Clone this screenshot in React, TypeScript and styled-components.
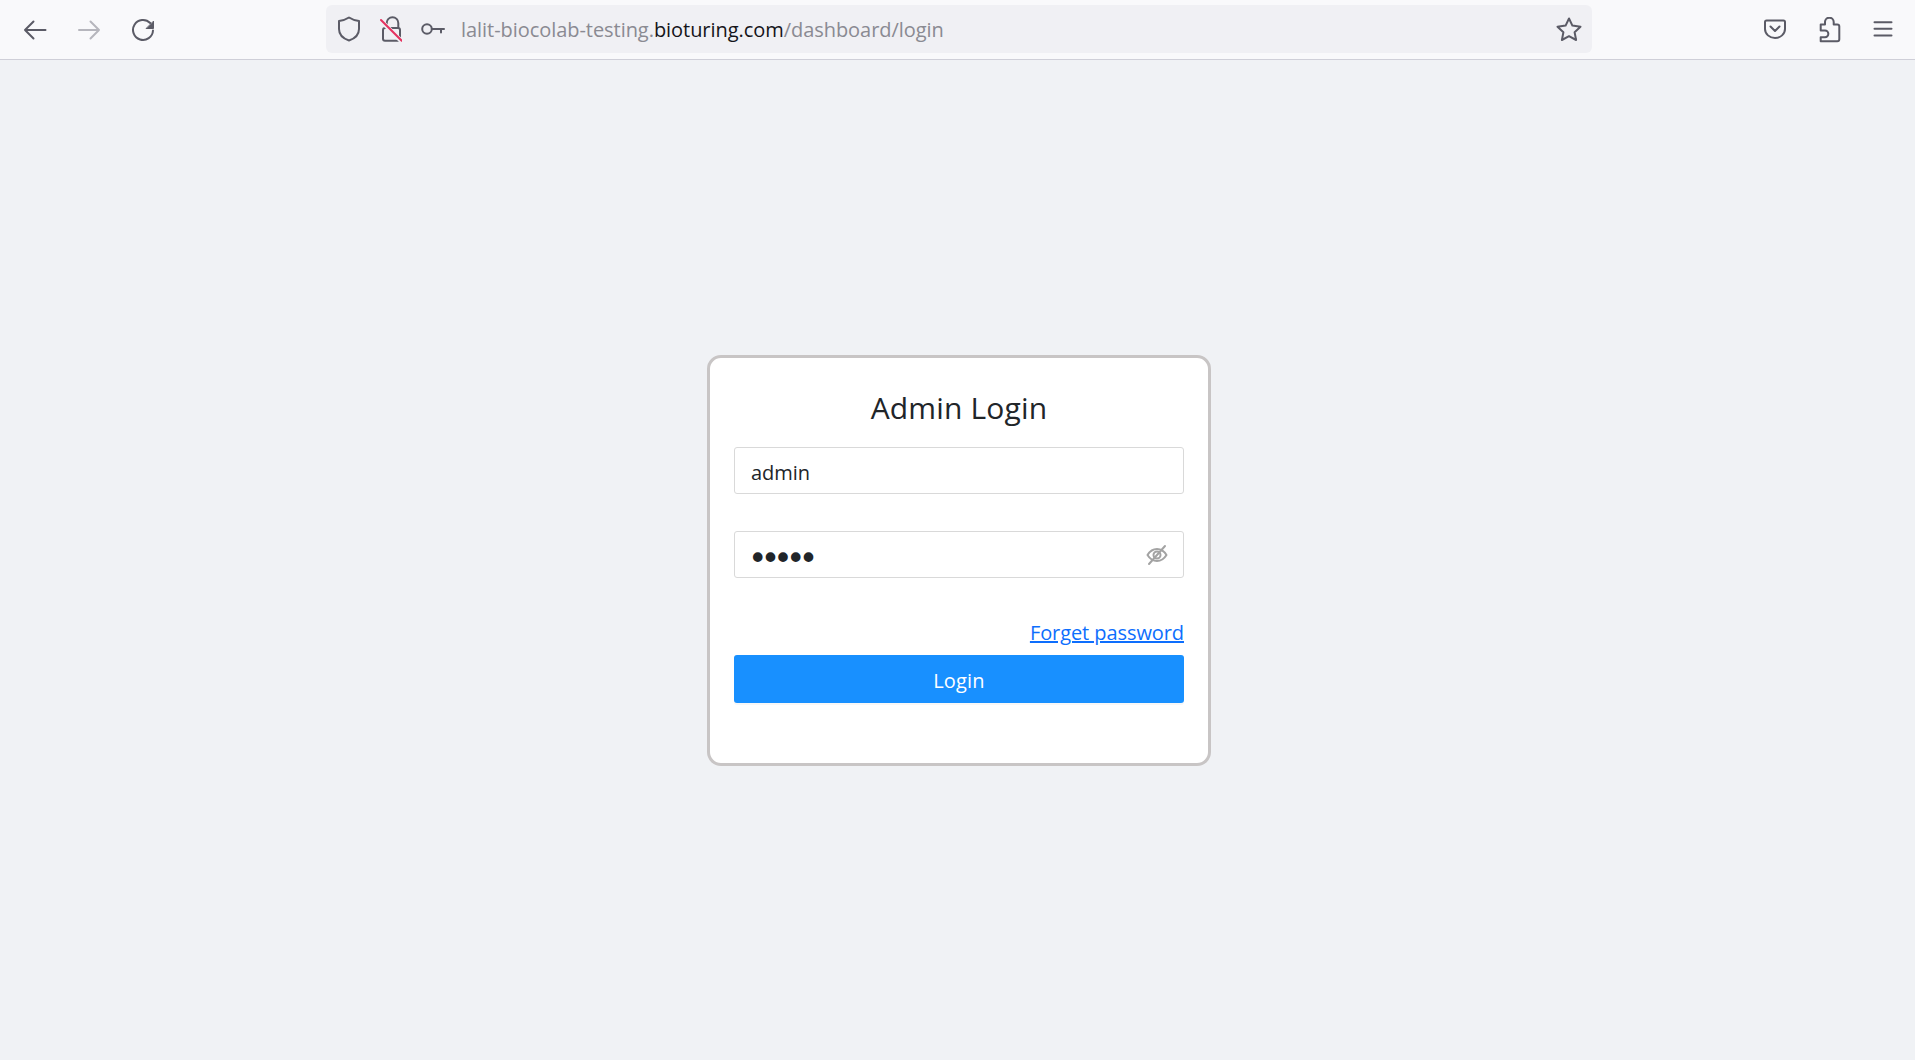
import React from "react";
import styled, { createGlobalStyle } from "styled-components";

const GlobalStyle = createGlobalStyle`
  html, body {
    margin: 0;
    padding: 0;
    height: 100%;
    background: #f0f2f5;
    font-family: "Open Sans", "Noto Sans", sans-serif;
  }
  #root {
    height: 100%;
  }
`;

const Page = styled.div`
  height: 1060px;
  display: flex;
  flex-direction: column;
  overflow: hidden;
`;

const Toolbar = styled.header`
  height: 58px;
  flex: none;
  display: flex;
  align-items: center;
  padding: 0 5px 1px 8px;
  background: #f9f9fb;
  border-bottom: 1px solid #cfcfd8;
`;

const NavGroup = styled.nav`
  display: flex;
  align-items: center;
`;

const ToolButton = styled.button<{ $dim?: boolean }>`
  width: 54px;
  height: 48px;
  padding: 2px 0 0;
  border: 0;
  background: none;
  display: flex;
  align-items: center;
  justify-content: center;
  color: ${(p) => (p.$dim ? "#b6b6bd" : "#5b5b66")};
`;

const UrlBar = styled.div`
  width: 1266px;
  height: 48px;
  margin-left: 156px;
  margin-right: auto;
  flex: none;
  display: flex;
  align-items: center;
  background: #f0f0f4;
  border-radius: 6px;
  color: #5b5b66;
`;

const UrlIcons = styled.div`
  display: flex;
  align-items: center;
  gap: 19px;
  padding-left: 11px;
`;

const UrlText = styled.div`
  margin-left: 16px;
  padding-top: 1px;
  flex: 1;
  font-size: 20px;
  letter-spacing: -0.05px;
  color: #8a8a92;
  white-space: nowrap;
`;

const Host = styled.span`
  color: #15141a;
`;

const StarSlot = styled.div`
  display: flex;
  padding-right: 10px;
`;

const Main = styled.main`
  flex: 1;
  display: flex;
  align-items: center;
  justify-content: center;
  padding: 1px 0 0 3px;
`;

const Card = styled.form`
  box-sizing: border-box;
  width: 504px;
  height: 411px;
  padding: 27px 24px 0;
  background: #fff;
  border: 3px solid #c8c5c5;
  border-radius: 14px;
  display: flex;
  flex-direction: column;
`;

const Title = styled.h1`
  margin: 0 0 16px;
  height: 46px;
  line-height: 46px;
  font-size: 30px;
  font-weight: 400;
  letter-spacing: 0.15px;
  text-align: center;
  color: #212529;
`;

const Field = styled.div`
  position: relative;
  height: 47px;
  margin-bottom: 37px;
`;

const Input = styled.input<{ $secret?: boolean }>`
  box-sizing: border-box;
  width: 100%;
  height: 100%;
  padding: ${(p) => (p.$secret ? "7px 13px 0" : "4px 16px 0")};
  font: 400 ${(p) => (p.$secret ? "33px \"DejaVu Sans\"" : "20px \"Open Sans\"")}, sans-serif;
  line-height: ${(p) => (p.$secret ? "30px" : "normal")};
  letter-spacing: ${(p) => (p.$secret ? "-6.8px" : "-0.06px")};
  color: #212529;
  background: #fff;
  border: 1px solid #d9d9d9;
  border-radius: 3px;
  outline: none;
`;

const EyeToggle = styled.span`
  position: absolute;
  top: 13px;
  right: 16px;
  display: flex;
  color: #a3a3a3;
`;

const LinkRow = styled.div`
  display: flex;
  justify-content: flex-end;
  margin-top: 5px;
  height: 26px;
  line-height: 26px;
`;

const ForgetLink = styled.a`
  font-size: 20px;
  letter-spacing: -0.08px;
  color: #0d6efd;
  text-decoration: underline;
`;

const SubmitButton = styled.button`
  margin-top: 9px;
  height: 48px;
  padding: 3px 0 0;
  font: 400 20px "Open Sans", "Noto Sans", sans-serif;
  letter-spacing: 0.2px;
  color: #fff;
  background: #1890ff;
  border: 0;
  border-radius: 3px;
  box-shadow: 0 2px 0 rgba(0, 0, 0, 0.03);
`;

const Icon = styled.svg.attrs({
  fill: "none",
  stroke: "currentColor",
  strokeWidth: 2,
  strokeLinecap: "round",
  strokeLinejoin: "round",
})`
  display: block;
  flex: none;
`;

export default function App() {
  return (
    <Page>
      <GlobalStyle />
      <Toolbar>
        <NavGroup>
          <ToolButton type="button" aria-label="Back">
            <Icon width="24" height="24" viewBox="0 0 24 24">
              <path d="M22.500 12H2M10.500 3.500L2 12l8.500 8.500" />
            </Icon>
          </ToolButton>
          <ToolButton type="button" aria-label="Forward" $dim>
            <Icon width="24" height="24" viewBox="0 0 24 24">
              <path d="M2 12h20M13.500 3.500L22 12l-8.500 8.500" />
            </Icon>
          </ToolButton>
          <ToolButton type="button" aria-label="Reload">
            <Icon width="24" height="24" viewBox="0 0 24 24">
              <path d="M19.200 5A10 10 0 1 0 22 12.500" />
              <path d="M22.500 3.500v7h-7z" fill="currentColor" strokeWidth="1" />
            </Icon>
          </ToolButton>
        </NavGroup>

        <UrlBar>
          <UrlIcons>
            <Icon width="24" height="26" viewBox="0 0 24 26">
              <path d="M12 1.500c3 2 6 3 10 3.500v8c0 5.500-4 9.500-10 11.500C6 22.500 2 18.500 2 13V5c4-.5 7-1.500 10-3.500z" />
            </Icon>
            <Icon width="22" height="26" viewBox="-1 0 22 26">
              <path d="M5.700 9V7a5.800 5.800 0 0 1 11.600 0v5" />
              <rect x="2" y="12" width="17" height="12.700" rx="2" />
              <path d="M0 4.800L20 24.800" stroke="#f0f0f4" strokeWidth="4.500" />
              <path d="M0 4L20.700 24.700" stroke="#e5325f" strokeWidth="2" />
            </Icon>
            <Icon width="24" height="14" viewBox="0 0 24 14">
              <circle cx="6" cy="7" r="4.800" />
              <path d="M10.800 7H23M20 7v3.500" />
            </Icon>
          </UrlIcons>
          <UrlText>
            lalit-biocolab-testing.<Host>bioturing.com</Host>/dashboard/login
          </UrlText>
          <StarSlot>
            <Icon width="26" height="25" viewBox="0 0 26 25">
              <path d="M13 1.500l3.400 7.100 8.100 1.100-5.900 5.500 1.500 7.800-7.100-3.800-7.100 3.800 1.500-7.800-5.900-5.500 8.100-1.100z" />
            </Icon>
          </StarSlot>
        </UrlBar>

        <NavGroup>
          <ToolButton type="button" aria-label="Pocket">
            <Icon width="24" height="22" viewBox="0 0 24 22">
              <path d="M3.500 1.500h17A1.500 1.500 0 0 1 22 3V10c0 5-4.500 9-10 9S2 15 2 10V3A1.500 1.500 0 0 1 3.500 1.500z" />
              <path d="M7.500 7.500L12 12l4.500-4.500" />
            </Icon>
          </ToolButton>
          <ToolButton type="button" aria-label="Extensions">
            <Icon width="24" height="26" viewBox="-1 0 24 26">
              <path d="M2.700 7.500H7V5a4.350 4.350 0 0 1 8.700 0v2.500h3.600a2 2 0 0 1 2 2v12.700a2 2 0 0 1-2 2H2.700v-4H7a3.350 3.350 0 0 0 0-6.700H2.700z" />
            </Icon>
          </ToolButton>
          <ToolButton type="button" aria-label="Menu">
            <Icon width="20" height="18" viewBox="0 0 20 18">
              <path d="M1.500 1.200h17M1.500 7.800h17M1.500 14.500h17" />
            </Icon>
          </ToolButton>
        </NavGroup>
      </Toolbar>

      <Main>
        <Card>
          <Title>Admin Login</Title>
          <Field>
            <Input type="text" defaultValue="admin" />
          </Field>
          <Field>
            <Input type="password" defaultValue="admin" $secret />
            <EyeToggle>
              <Icon width="22" height="22" viewBox="0 0 22 22" strokeWidth="1.500">
                <path d="M1.500 11C4 7 7 5 11 5s7 2 9.500 6C18 15 15 17 11 17S4 15 1.500 11z" />
                <circle cx="11" cy="11" r="3.500" />
                <path d="M3 20L19 2" />
              </Icon>
            </EyeToggle>
          </Field>
          <LinkRow>
            <ForgetLink href="#">Forget password</ForgetLink>
          </LinkRow>
          <SubmitButton type="button">Login</SubmitButton>
        </Card>
      </Main>
    </Page>
  );
}
